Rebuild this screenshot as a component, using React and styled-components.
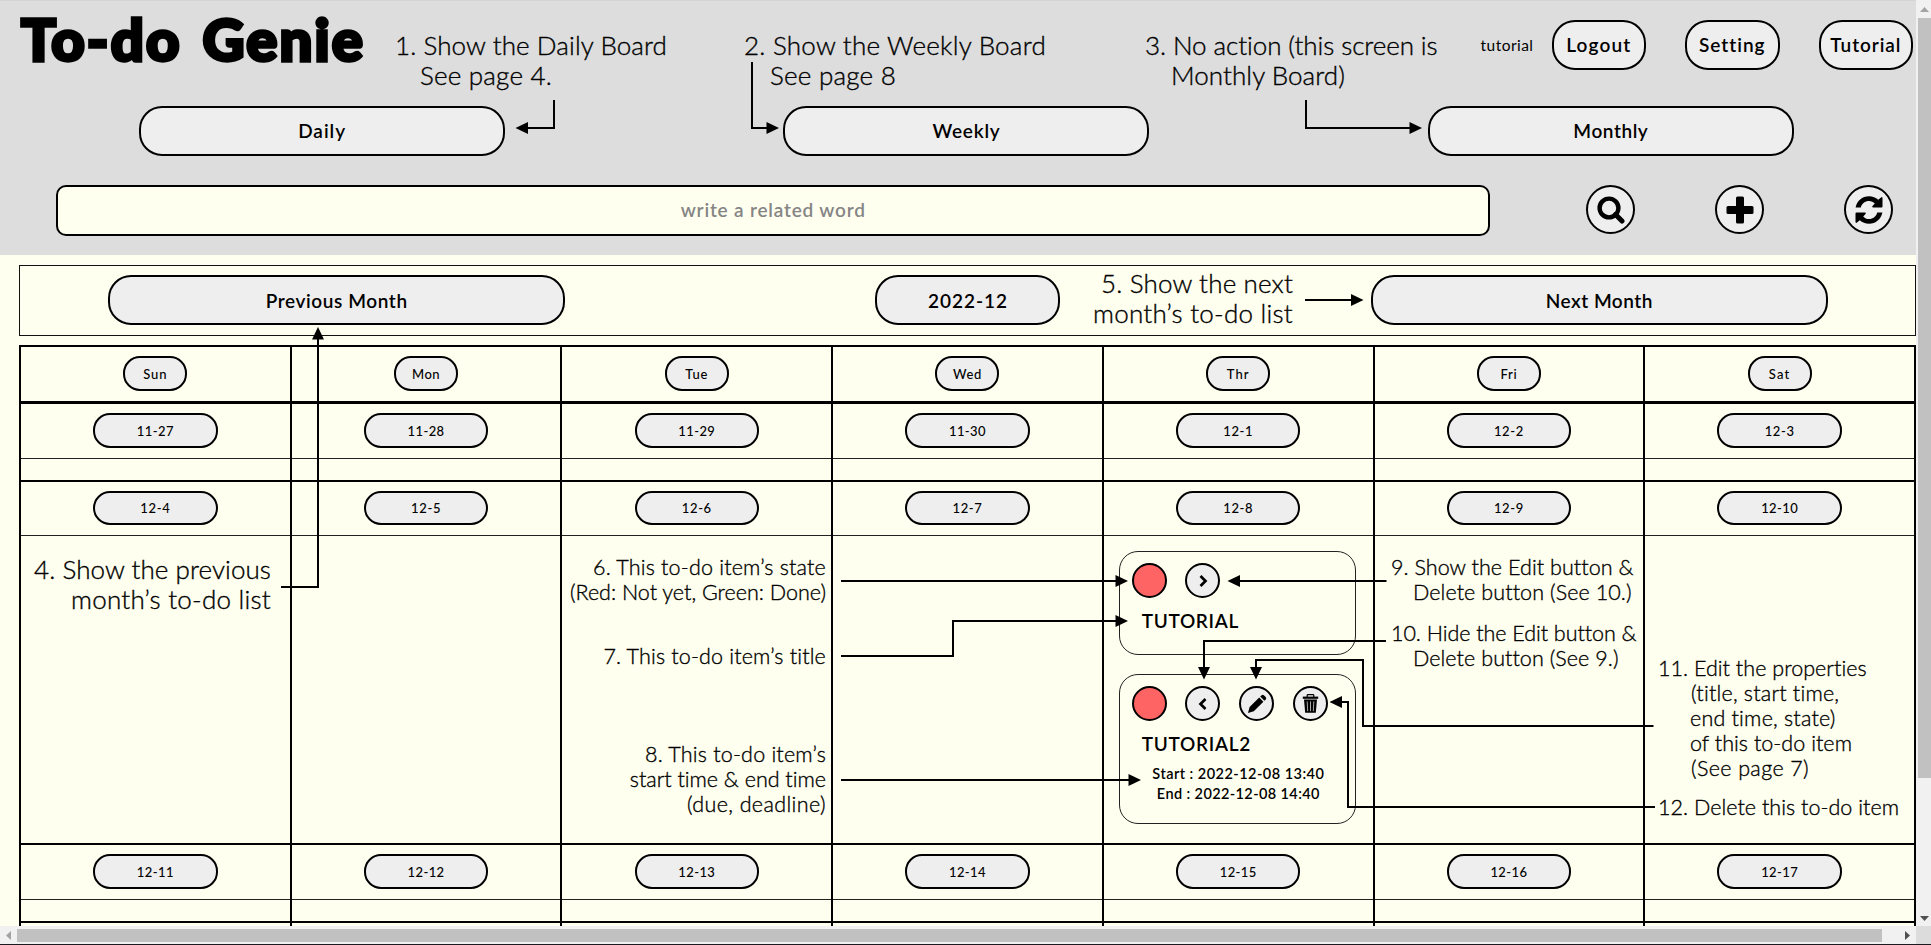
import React, { useLayoutEffect, useRef, useState } from "react";
import styled, { createGlobalStyle, css } from "styled-components";

const Global = createGlobalStyle`
  * { box-sizing: border-box; }
  body { margin: 0; background: #ffffef; overflow: hidden; }
  body, button, input { font-family: Lato, "Open Sans", sans-serif; color: #000; }
`;

const Window = styled.div`
  display: grid;
  grid-template: 926px 18px / 1916px 15px;
  width: 1931px;
  height: 945px;
  border-bottom: 1px solid #1a1a1f;
`;

const Viewport = styled.div`
  position: relative;
  overflow: hidden;
  background: #ffffef;
`;

const Header = styled.header`
  width: 1933px;
  height: 255px;
  background: #ddd;
  border-top: 1px solid #d4d4d4;
`;

const TopBar = styled.div`
  display: flex;
  height: 105px;
  padding: 19px 20px 0 21px;
`;

const Brand = styled.h1`
  margin: -17px auto 0 0;
  font-size: 58px;
  line-height: 72px;
  font-weight: 900;
  word-spacing: 5px;
  -webkit-text-stroke: 3.5px #000;
`;

const UserName = styled.span`
  width: 52px;
  margin-right: 19px;
  font-size: 15.5px;
  line-height: 50px;
  height: 49px;
`;

const AccountActions = styled.div`
  display: flex;
  gap: 39px;
`;

const Pill = styled.button`
  display: flex;
  align-items: center;
  justify-content: center;
  width: ${(p) => p.$w}px;
  height: ${(p) => (p.$small ? 34.5 : 49.5)}px;
  padding: 0;
  border: 2px solid #000;
  border-radius: ${(p) => (p.$small ? 17 : 23)}px;
  background: #eee;
  font-size: ${(p) => (p.$small ? 13 : 19)}px;
  font-weight: ${(p) => (p.$small ? 500 : 600)};
`;

const Boards = styled.nav`
  display: grid;
  grid-template-columns: repeat(3, 1fr);
  justify-items: center;
  height: 79px;
`;

const SearchRow = styled.div`
  display: grid;
  grid-template-columns: 12fr 1fr 1fr 1fr;
  justify-items: center;
`;

const SearchField = styled.div`
  display: flex;
  align-items: center;
  justify-content: center;
  width: 1434px;
  height: 51px;
  padding-bottom: 2px;
  border: 2px solid #000;
  border-radius: 10px;
  background: #ffffef;
  color: #858585;
  font-size: 19px;
  font-weight: 600;
`;

const Round = styled.button`
  display: flex;
  align-items: center;
  justify-content: center;
  width: ${(p) => p.$size}px;
  height: ${(p) => p.$size}px;
  padding: 0;
  border: 2px solid #000;
  border-radius: 50%;
  background: ${(p) => p.$fill || "#eee"};
`;

const MonthBar = styled.div`
  display: grid;
  grid-template-columns: repeat(3, 1fr);
  justify-items: center;
  align-items: center;
  width: 1897px;
  height: 71px;
  margin: 10px 0 9px 19px;
  padding: 0 0 1px 1px;
  border: 1px solid #111;
`;

const Calendar = styled.div`
  width: 1897px;
  margin-left: 19px;
  border: 2px solid #000;
  border-width: 2px 0 0 2px;
`;

const Week = styled.div`
  display: grid;
  grid-template-columns: repeat(7, 1fr);
  border-bottom: ${(p) => (p.$heading ? 3 : 2)}px solid #000;
`;

const Day = styled.div`
  border-right: 2px solid #000;
`;

const DayHead = styled.div`
  display: flex;
  justify-content: center;
  align-items: center;
  height: ${(p) => p.$h}px;
  padding-bottom: 1px;
  ${(p) => p.$ruled && css`border-bottom: 1px solid #222;`}
`;

const DayBody = styled.div`
  display: flex;
  flex-direction: column;
  gap: 19px;
  height: ${(p) => p.$h}px;
  padding: 15px 15px 0 15px;
`;

const Card = styled.article`
  width: 237px;
  height: ${(p) => p.$h}px;
  padding: 11px 12px;
  border: 1px solid #222;
  border-radius: 19px;
`;

const CardActions = styled.div`
  display: flex;
  gap: 18.6px;
`;

const CardTitle = styled.h3`
  margin: 11px 0 0 10px;
  font-size: 19px;
  line-height: 24px;
  font-weight: 600;
`;

const CardTimes = styled.div`
  margin: 8px 0 0 11px;
  width: 191px;
  text-align: center;
  font-size: 14.5px;
  line-height: 20px;
  font-weight: 600;
`;

const Fitted = styled.span`
  display: inline-block;
  white-space: pre;
`;

const Overlay = styled.svg`
  position: absolute;
  inset: 0;
  pointer-events: none;
`;

const Note = styled.div`
  position: absolute;
  display: flex;
  flex-direction: column;
  left: ${(p) => p.$x}px;
  top: ${(p) => p.$y + 1}px;
  font-size: ${(p) => (p.$large ? 26 : 21.5)}px;
  line-height: ${(p) => (p.$large ? 30 : 25)}px;
  font-weight: 300;
  -webkit-text-stroke: 0.35px #000;
  align-items: ${(p) => (p.$right ? "flex-end" : "flex-start")};
  ${(p) => p.$right && css`transform: translateX(-100%);`}
`;

const NoteLine = styled.div`
  padding-left: ${(p) => p.$indent || 0}px;
`;

const VBar = styled.div`
  display: flex;
  flex-direction: column;
  align-items: center;
  justify-content: space-between;
  padding: 7px 0 5px 2px;
  background: #f1f1f1;
`;

const HBar = styled.div`
  display: flex;
  align-items: center;
  padding: 1px 4px 0 4px;
  background: #f1f1f1;
`;

const Thumb = styled.div`
  background: #c1c1c1;
  ${(p) => (p.$vertical ? css`width: 13px; height: 760px; margin: 6px 0 auto;` : css`width: 1865px; height: 13px; margin: 0 auto 0 4px;`)}
`;

const Corner = styled.div`
  background: #dcdcdc;
`;

const Triangle = styled.svg`
  display: block;
  flex: none;
  transform: rotate(${(p) => p.$turn}deg);
`;

function Fit({ width, children }) {
  const ref = useRef(null);
  const [spacing, setSpacing] = useState(0);
  useLayoutEffect(() => {
    const natural = ref.current.getBoundingClientRect().width;
    setSpacing((width + 2 - natural) / children.length);
  }, [width, children]);
  return <Fitted ref={ref} style={{ letterSpacing: spacing }}>{children}</Fitted>;
}

function ScrollArrow({ turn, color }) {
  return (
    <Triangle $turn={turn} width="9" height="5" viewBox="0 0 9 5">
      <path d="M0 5 4.5 0 9 5Z" fill={color} />
    </Triangle>
  );
}

function SearchIcon() {
  return (
    <svg width="28" height="28" viewBox="0 0 28 28">
      <circle cx="12" cy="12" r="9.400" fill="none" stroke="#000" strokeWidth="4.400" />
      <path d="M18.500 18.500 25 25" stroke="#000" strokeWidth="5" strokeLinecap="round" />
    </svg>
  );
}

function PlusIcon() {
  return (
    <svg width="28" height="28" viewBox="0 0 28 28">
      <rect x="10" y=".5" width="8" height="27" rx="1.500" />
      <rect x=".5" y="10" width="27" height="8" rx="1.500" />
    </svg>
  );
}

function RefreshIcon() {
  const half = "M.6 11.500C1.800 5 7.200.2 14 .2c3.600 0 6.800 1.300 9.200 3.500L26 1.400q1.500-.9 1.500.8v8.300q0 1-1 1h-8.300q-1.800 0-.7-1.400l2.300-2.500C18.300 6 16.300 5 14 5c-4 0-7.200 2.600-8.200 6.500Z";
  return (
    <svg width="28" height="28" viewBox="0 0 28 28">
      <path d={half} />
      <path d={half} transform="rotate(180 14 14)" />
    </svg>
  );
}

function ChevronIcon({ left }) {
  return (
    <svg width="12" height="14" viewBox="0 0 12 14">
      <path d={left ? "M8.500 2 3.500 7l5 5" : "M3.500 2l5 5-5 5"} fill="none" stroke="#000" strokeWidth="2.700" />
    </svg>
  );
}

function PencilIcon() {
  return (
    <svg width="20" height="20" viewBox="0 0 20 20">
      <path d="M1 19 2.600 13 12.200 3.600 16.400 7.800 6.800 17.300Z" />
      <path d="M13.200 2.600 14.600 1.300q1.300-1 2.500.1l1.600 1.600q1.100 1.200 0 2.400L17.400 6.800Z" />
    </svg>
  );
}

function TrashIcon() {
  return (
    <svg width="17" height="20" viewBox="0 0 17 20">
      <path d="M5.200 3V1.300Q5.200.6 6 .6h5q.8 0 .8.7V3" fill="none" stroke="#000" strokeWidth="1.200" />
      <path d="M.8 2.600h15.400v2.200H.8Z" />
      <path d="M2 5.600h13l-1.200 13.200H3.200Z" />
      <path d="M5.200 7.400l.5 9.800M8.500 7.400v9.800M11.800 7.400l-.5 9.800" stroke="#eee" strokeWidth=".7" />
    </svg>
  );
}

const dayNames = [["Sun", 22], ["Mon", 26], ["Tue", 21], ["Wed", 27], ["Thr", 21], ["Fri", 15], ["Sat", 20]];

const weeks = [
  { head: 55, body: 21, dates: ["11-27", "11-28", "11-29", "11-30", "12-1", "12-2", "12-3"] },
  { head: 54, body: 307, dates: ["12-4", "12-5", "12-6", "12-7", "12-8", "12-9", "12-10"] },
  { head: 55, body: 21, dates: ["12-11", "12-12", "12-13", "12-14", "12-15", "12-16", "12-17"] },
];

const notes = [
  { x: 395, y: 29, large: true, lines: [["1. Show the Daily Board", 270], ["See page 4.", 130, 25]] },
  { x: 744, y: 29, large: true, lines: [["2. Show the Weekly Board", 300], ["See page 8", 124, 26]] },
  { x: 1145, y: 29, large: true, lines: [["3. No action (this screen is", 291], ["Monthly Board)", 172, 26]] },
  { x: 271, y: 553, large: true, right: true, lines: [["4. Show the previous", 235], ["month’s to-do list", 198]] },
  { x: 1293, y: 267, large: true, right: true, lines: [["5. Show the next", 190], ["month’s to-do list", 198]] },
  { x: 826, y: 554, right: true, lines: [["6. This to-do item’s state", 231], ["(Red: Not yet, Green: Done)", 254]] },
  { x: 826, y: 643, right: true, lines: [["7. This to-do item’s title", 221]] },
  { x: 826, y: 741, right: true, lines: [["8. This to-do item’s", 179], ["start time & end time", 195], ["(due, deadline)", 137]] },
  { x: 1391, y: 554, lines: [["9. Show the Edit button &", 240], ["Delete button (See 10.)", 216, 22]] },
  { x: 1391, y: 620, lines: [["10. Hide the Edit button &", 243], ["Delete button (See 9.)", 203, 22]] },
  { x: 1658, y: 655, lines: [["11. Edit the properties", 207], ["(title, start time,", 147, 33], ["end time, state)", 144, 32], ["of this to-do item", 160, 32], ["(See page 7)", 116, 33]] },
  { x: 1658, y: 794, lines: [["12. Delete this to-do item", 239]] },
];

const arrows = [
  "M554 100V128H526", "M752 62V128H767", "M1306 100V128H1411", "M281 587H318V338",
  "M1305 300H1352", "M841 581H1117", "M841 656H953V621H1117", "M841 780H1130",
  "M1386.500 581H1238", "M1386 641H1204V668", "M1653.500 726H1363V660H1256V668", "M1655 807H1348V702H1340",
];

const heads = [
  [515.5, 128, 180], [779, 128, 0], [1422, 128, 0], [318, 327, -90], [1363.5, 300, 0], [1128, 581, 0],
  [1128, 621, 0], [1141, 780, 0], [1227.5, 581, 180], [1204, 679.5, 90], [1256, 679.5, 90], [1329.5, 702, 180],
];

function TodoCards() {
  return (
    <>
      <Card $h={104}>
        <CardActions>
          <Round $size={35} $fill="#ff6464" />
          <Round $size={35}><ChevronIcon /></Round>
        </CardActions>
        <CardTitle><Fit width={95}>TUTORIAL</Fit></CardTitle>
      </Card>
      <Card $h={150}>
        <CardActions>
          <Round $size={35} $fill="#ff6464" />
          <Round $size={35}><ChevronIcon left /></Round>
          <Round $size={35}><PencilIcon /></Round>
          <Round $size={35}><TrashIcon /></Round>
        </CardActions>
        <CardTitle><Fit width={107}>TUTORIAL2</Fit></CardTitle>
        <CardTimes>
          <Fit width={170}>Start : 2022-12-08 13:40</Fit>
          <Fit width={161}>End : 2022-12-08 14:40</Fit>
        </CardTimes>
      </Card>
    </>
  );
}

export default function App() {
  return (
    <Window>
      <Global />
      <Viewport>
        <Header>
          <TopBar>
            <Brand><Fit width={342}>To-do Genie</Fit></Brand>
            <UserName><Fit width={51}>tutorial</Fit></UserName>
            <AccountActions>
              <Pill $w={94.5}><Fit width={63}>Logout</Fit></Pill>
              <Pill $w={94.5}><Fit width={64}>Setting</Fit></Pill>
              <Pill $w={94.5}><Fit width={69}>Tutorial</Fit></Pill>
            </AccountActions>
          </TopBar>
          <Boards>
            <Pill $w={366}><Fit width={46}>Daily</Fit></Pill>
            <Pill $w={366}><Fit width={66}>Weekly</Fit></Pill>
            <Pill $w={366}><Fit width={73}>Monthly</Fit></Pill>
          </Boards>
          <SearchRow>
            <SearchField><Fit width={183}>write a related word</Fit></SearchField>
            <Round $size={49}><SearchIcon /></Round>
            <Round $size={49}><PlusIcon /></Round>
            <Round $size={49}><RefreshIcon /></Round>
          </SearchRow>
        </Header>
        <MonthBar>
          <Pill $w={457}><Fit width={140}>Previous Month</Fit></Pill>
          <Pill $w={185}><Fit width={78}>2022-12</Fit></Pill>
          <Pill $w={457}><Fit width={105}>Next Month</Fit></Pill>
        </MonthBar>
        <Calendar>
          <Week $heading>
            {dayNames.map(([name, w]) => (
              <Day key={name}><DayHead $h={54}><Pill $small $w={64}><Fit width={w}>{name}</Fit></Pill></DayHead></Day>
            ))}
          </Week>
          {weeks.map((week) => (
            <Week key={week.dates[0]}>
              {week.dates.map((date) => (
                <Day key={date}>
                  <DayHead $ruled $h={week.head}>
                    <Pill $small $w={124.5}><Fit width={date.length === 5 ? 35 : 28}>{date}</Fit></Pill>
                  </DayHead>
                  <DayBody $h={week.body}>{date === "12-8" && <TodoCards />}</DayBody>
                </Day>
              ))}
            </Week>
          ))}
          <Week>
            {dayNames.map(([name]) => <Day key={name}><DayHead $h={54} /></Day>)}
          </Week>
        </Calendar>
        <Overlay width="1916" height="926">
          {arrows.map((d) => <path key={d} d={d} fill="none" stroke="#000" strokeWidth="2" />)}
          {heads.map(([x, y, turn]) => (
            <path key={`${x}-${y}`} d="M0 0-12.500-6V6Z" transform={`translate(${x} ${y}) rotate(${turn})`} />
          ))}
        </Overlay>
        {notes.map((n) => (
          <Note key={n.lines[0][0]} $x={n.x} $y={n.y} $large={n.large} $right={n.right}>
            {n.lines.map(([text, w, indent]) => (
              <NoteLine key={text} $indent={indent}><Fit width={w}>{text}</Fit></NoteLine>
            ))}
          </Note>
        ))}
      </Viewport>
      <VBar>
        <ScrollArrow turn={0} color="#a3a3a3" />
        <Thumb $vertical />
        <ScrollArrow turn={180} color="#505050" />
      </VBar>
      <HBar>
        <ScrollArrow turn={-90} color="#a3a3a3" />
        <Thumb />
        <ScrollArrow turn={90} color="#505050" />
      </HBar>
      <Corner />
    </Window>
  );
}
